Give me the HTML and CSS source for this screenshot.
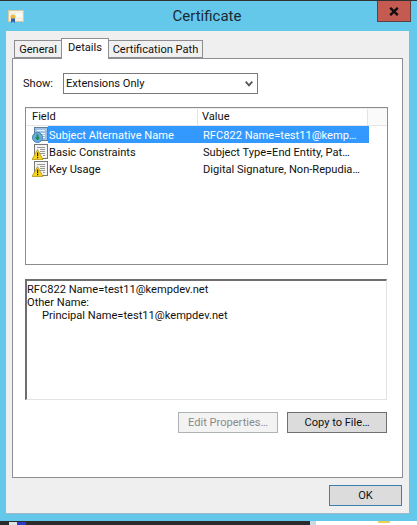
FILE: index.html
```html
<!DOCTYPE html>
<html lang="en">
<head>
<meta charset="utf-8">
<title>Certificate</title>
<link rel="stylesheet" href="styles.css">
</head>
<body>
<div class="window">
  <header class="titlebar">
    <div class="title-left">
      <svg class="cert-icon" width="16" height="13" viewBox="0 0 16 13">
        <rect x="0.5" y="0.5" width="15" height="11" fill="#f7f1df" stroke="#d9c9a3"/>
        <rect x="8" y="3" width="6" height="4" fill="#fff"/>
        <circle cx="5" cy="7" r="2.5" fill="#e9b949"/>
        <path d="M3 8.5h4V13L5 11.5 3 13z" fill="#2f5fb5"/>
      </svg>
    </div>
    <div class="title">Certificate</div>
    <div class="title-right">
      <div class="close">
        <svg width="10" height="9" viewBox="0 0 10 9"><path d="M1.2 0.8 8.8 8.2M8.8 0.8 1.2 8.2" stroke="#111" stroke-width="2.4"/></svg>
      </div>
    </div>
  </header>
  <main class="client">
    <nav class="tabs">
      <div class="tab tab-general">General</div>
      <div class="tab active">Details</div>
      <div class="tab tab-path">Certification Path</div>
    </nav>
    <section class="page">
      <div class="show-row">
        <span class="show-label">Show:</span>
        <div class="select">
          <span>Extensions Only</span>
          <svg width="8" height="6" viewBox="0 0 8 6"><path d="M0.7 0.7 4 4.3 7.3 0.7" fill="none" stroke="#555" stroke-width="1.8"/></svg>
        </div>
      </div>
      <div class="list">
        <div class="list-head">
          <div class="col-field">Field</div>
          <div class="col-value">Value</div>
          <div class="col-rest"></div>
        </div>
        <div class="row selected">
          <svg class="row-icon" width="16" height="16" viewBox="0 0 16 16">
            <rect x="2.5" y="0.5" width="13" height="13" fill="#9fc3e8" stroke="#5f7f9f"/>
            <path d="M5 3h8v1H5zM9 6h4v1H9zM9 8h4v1H9zM9 10h4v1H9z" fill="#eef5fc"/>
            <circle cx="5.5" cy="10.500" r="5" fill="#6aaedc" stroke="#3f7fae"/>
            <path d="M4.500 7.500h2v3h1.600L5.500 13.500 2.900 10.500h1.600z" fill="#1f8a4a"/>
          </svg>
          <div class="cell-field">Subject Alternative Name</div>
          <div class="cell-value">RFC822 Name=test11@kemp…</div>
        </div>
        <div class="row">
          <svg class="row-icon" width="16" height="16" viewBox="0 0 16 16">
            <rect x="2.500" y="0.500" width="13" height="14" fill="#f4f4f4" stroke="#777"/>
            <path d="M5 3h8v1H5zM8 5h5v1H8zM8 7h5v1H8zM8 9h5v1H8zM11 11h2v1h-2z" fill="#999"/>
            <path d="M5.500 5.500 11 15.500H0z" fill="#f7d51d" stroke="#a88a10" stroke-width="0.700"/>
            <path d="M5 8.500h1.200v3.800H5zM5 13h1.200v1.200H5z" fill="#222"/>
          </svg>
          <div class="cell-field">Basic Constraints</div>
          <div class="cell-value">Subject Type=End Entity, Pat…</div>
        </div>
        <div class="row">
          <svg class="row-icon" width="16" height="16" viewBox="0 0 16 16">
            <rect x="2.500" y="0.500" width="13" height="14" fill="#f4f4f4" stroke="#777"/>
            <path d="M5 3h8v1H5zM8 5h5v1H8zM8 7h5v1H8zM8 9h5v1H8zM11 11h2v1h-2z" fill="#999"/>
            <path d="M5.500 5.500 11 15.500H0z" fill="#f7d51d" stroke="#a88a10" stroke-width="0.700"/>
            <path d="M5 8.500h1.200v3.800H5zM5 13h1.200v1.200H5z" fill="#222"/>
          </svg>
          <div class="cell-field">Key Usage</div>
          <div class="cell-value">Digital Signature, Non-Repudia…</div>
        </div>
      </div>
      <div class="detail">
        <div class="detail-line">RFC822 Name=test11@kempdev.net</div>
        <div class="detail-line">Other Name:</div>
        <div class="detail-line indent">Principal Name=test11@kempdev.net</div>
      </div>
      <div class="page-buttons">
        <div class="btn disabled">Edit Properties…</div>
        <div class="btn strong">Copy to File…</div>
      </div>
    </section>
    <div class="footer">
      <div class="btn ok">OK</div>
    </div>
  </main>
  <footer class="taskbar">
    <div class="task-icons">
      <span class="task-a"></span>
      <span class="task-b"></span>
    </div>
    <div class="desk">
      <span class="desk-mark"></span>
    </div>
  </footer>
</div>
</body>
</html>
```
FILE: styles.css
```css
html, body {
  margin: 0;
  padding: 0;
}

body {
  width: 417px;
  height: 525px;
  overflow: hidden;
  font-family: Roboto, "Noto Sans", sans-serif;
  font-size: 11.1px;
  color: #111;
}

.window {
  width: 417px;
  height: 525px;
  background: #63c8ea;
  border-top: 1px solid #2f3336;
  box-sizing: border-box;
  display: flex;
  flex-direction: column;
}

.titlebar {
  height: 30px;
  flex: none;
  display: grid;
  grid-template-columns: 1fr auto 1fr;
  padding: 0 6px 0 3px;
}

.title-left {
  padding: 9px 0 0 5px;
}

.cert-icon {
  display: block;
}

.title {
  font-size: 15px;
  line-height: 30px;
  color: #1c2a33;
}

.title-right {
  display: flex;
  justify-content: flex-end;
}

.close {
  width: 34px;
  height: 21px;
  box-sizing: border-box;
  background: #c55a50;
  border: 1px solid #5b4140;
  border-top: 0;
  display: flex;
  align-items: center;
  justify-content: center;
}

.client {
  height: 483px;
  flex: none;
  margin: 0 8px 0 6px;
  background: #efefef;
  box-sizing: border-box;
  padding: 7px 6px 0;
  display: flex;
  flex-direction: column;
  border-bottom: 1px solid #9fb8c6;
}

.tabs {
  display: flex;
  align-items: flex-end;
  height: 20px;
  flex: none;
  padding-left: 2px;
  position: relative;
  z-index: 1;
}

.tab {
  height: 18px;
  box-sizing: border-box;
  line-height: 18px;
  text-align: center;
  background: #f0f0f0;
  border: 1px solid #8e8e92;
  margin-left: -1px;
}

.tab-general {
  width: 48px;
  margin-left: 0;
}

.tab-path {
  width: 95px;
}

.tab.active {
  width: 48px;
  height: 21px;
  background: #fff;
  border-bottom: 0;
  line-height: 18px;
  position: relative;
  margin-bottom: -1px;
}

.page {
  height: 420px;
  flex: none;
  background: #fff;
  border: 1px solid #8e8e92;
  box-sizing: border-box;
  padding: 14px 14px 0 12px;
  display: flex;
  flex-direction: column;
}

.show-row {
  display: flex;
  align-items: center;
  height: 21px;
  margin-left: -2px;
}

.show-label {
  width: 40px;
}

.select {
  width: 195px;
  height: 21px;
  box-sizing: border-box;
  border: 1px solid #7a7a7a;
  display: flex;
  align-items: center;
  justify-content: space-between;
  padding: 0 4px 0 2px;
}

.list {
  margin-top: 13px;
  height: 158px;
  width: 363px;
  flex: none;
  box-sizing: border-box;
  border: 1px solid #8c8c90;
}

.list-head {
  display: flex;
  height: 16px;
  border-top: 1px solid #eee;
  border-bottom: 1px solid #e6e6e6;
  line-height: 16px;
}

.col-field {
  width: 172px;
  box-sizing: border-box;
  padding-left: 6px;
  border-right: 1px solid #e4e4e4;
}

.col-value {
  width: 170px;
  box-sizing: border-box;
  padding-left: 4px;
  border-right: 1px solid #e4e4e4;
}

.col-rest {
  flex: 1;
  background: #fafafa;
}

.row {
  display: flex;
  align-items: center;
  height: 17px;
  padding-left: 6px;
}

.row-icon {
  flex: none;
  width: 16px;
  height: 16px;
}

.cell-field {
  width: 151px;
  box-sizing: border-box;
  flex: none;
  padding-left: 1px;
  line-height: 19px;
  height: 17px;
}

.cell-value {
  flex: none;
  width: 170px;
  box-sizing: border-box;
  padding-left: 4px;
  white-space: nowrap;
  line-height: 19px;
  height: 17px;
}

.row.selected .cell-field,
.row.selected .cell-value {
  background: #3399ff;
  color: #fff;
}

.detail {
  margin-top: 14px;
  width: 362px;
  height: 121px;
  flex: none;
  box-sizing: border-box;
  border: 1px solid #e3e3e3;
  border-top: 2px solid #6e6e6e;
  border-left: 2px solid #6e6e6e;
  padding: 2px 0 0 0;
}

.detail-line {
  height: 13px;
  line-height: 13px;
}

.indent {
  padding-left: 15px;
}

.page-buttons {
  margin-top: 12px;
  width: 362px;
  display: flex;
  justify-content: flex-end;
  gap: 9px;
}

.btn {
  height: 21px;
  width: 100px;
  box-sizing: border-box;
  display: flex;
  align-items: center;
  justify-content: center;
  background: #dcdcdc;
  border: 1px solid #6f6f6f;
}

.btn.disabled {
  background: #f3f3f3;
  border-color: #adb2b5;
  color: #8a8a8a;
}

.footer {
  display: flex;
  justify-content: flex-end;
  padding: 7px 1px 0 0;
}

.btn.ok {
  width: 73px;
  border-color: #3c7fb1;
}

.taskbar {
  flex: 1;
  margin-top: 7px;
  display: flex;
  background: #2b2b2b;
  overflow: hidden;
}

.task-icons {
  width: 310px;
  display: flex;
  padding: 1px 0 0 9px;
  box-sizing: border-box;
}

.task-a {
  width: 8px;
  height: 3px;
  background: #dfe3e8;
  display: block;
}

.task-b {
  width: 9px;
  height: 3px;
  background: #2b3bc0;
  display: block;
}

.desk {
  flex: 1;
  background: #fff;
  border-left: 6px solid #c4dbe6;
  padding-left: 62px;
}

.desk-mark {
  display: block;
  width: 12px;
  height: 2px;
  background: #f0d050;
}
```
